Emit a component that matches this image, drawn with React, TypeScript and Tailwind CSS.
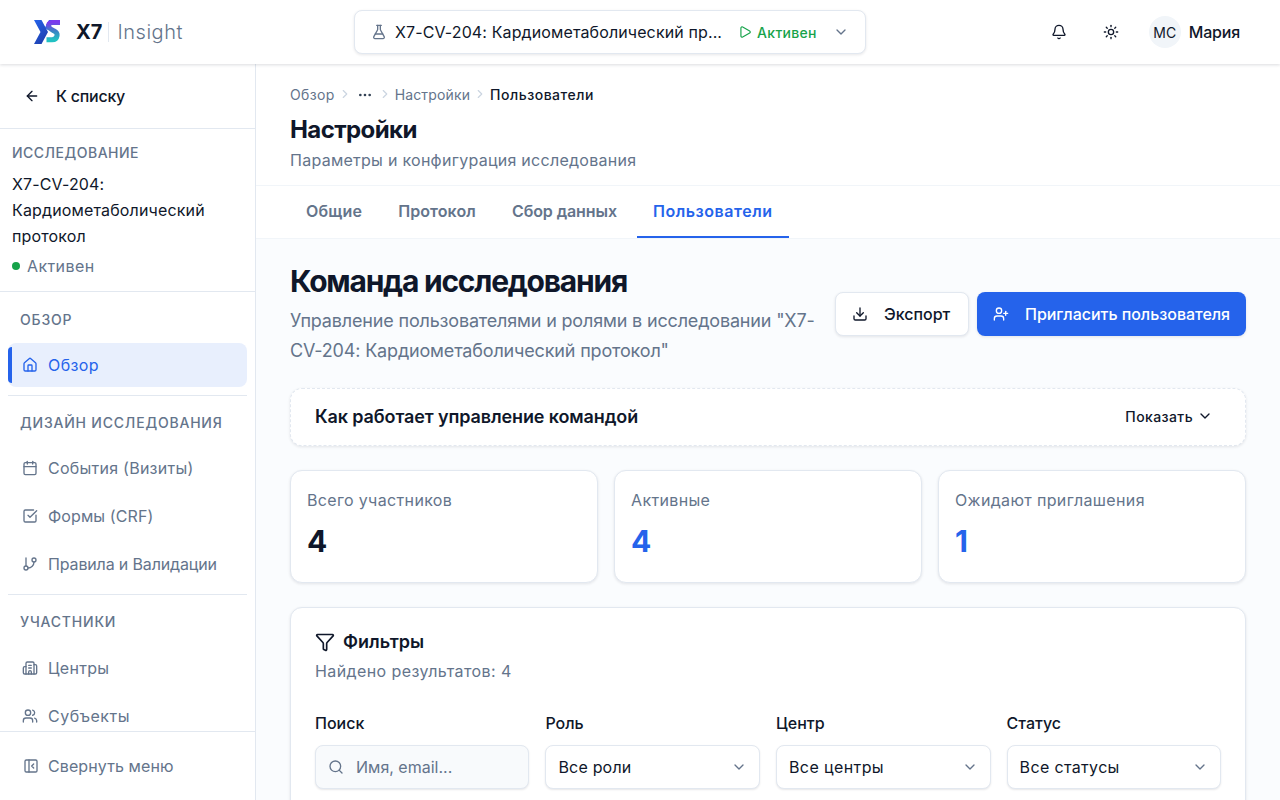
import {
  ArrowLeft,
  Bell,
  Building2,
  Calendar,
  ChevronDown,
  ChevronRight,
  Download,
  Ellipsis,
  FlaskConical,
  Funnel,
  GitBranch,
  House,
  PanelLeftClose,
  Play,
  Search,
  SquareCheckBig,
  Sun,
  UserPlus,
  Users,
} from 'lucide-react';
import type { ReactNode } from 'react';

const Logo = () => (
  <svg className="ml-px" width="28" height="26" viewBox="0 0 28 26" fill="none">
    <defs>
      <linearGradient id="lx" x1="0" y1="0" x2="0.6" y2="1">
        <stop offset="0" stopColor="#2563eb" />
        <stop offset="1" stopColor="#1e40af" />
      </linearGradient>
      <linearGradient id="ls" x1="0" y1="0" x2="0" y2="1">
        <stop offset="0" stopColor="#7c3aed" />
        <stop offset="0.5" stopColor="#3b82c4" />
        <stop offset="1" stopColor="#22c1c3" />
      </linearGradient>
    </defs>
    <path d="M12 8.500 16 1h4.500L14.500 11z" fill="#2563eb" />
    <path d="M1 1h7.500l6.500 12-6.500 12H1l6.500-12z" fill="url(#lx)" />
    <path d="M27 3.500h-7.500c-3.200 0-4.700 2.200-3.700 4.500.8 1.900 3 2.800 5 3.800 2 1 3.700 2.400 3.300 4.700-.4 2.600-2.500 4.200-5 4.200h-5.600" stroke="url(#ls)" strokeWidth="5" fill="none" />
  </svg>
);

const NavItem = ({ icon, label, active, tr = '' }: { icon: ReactNode; label: string; active?: boolean; tr?: string }) => (
  <div className={`relative flex h-11 items-center gap-2.5 rounded-lg px-3.5 text-[16px] ${active ? 'bg-[#e8effd] text-[#2563eb]' : 'text-[#64748b]'}`}>
    {active && <div className="absolute left-0 top-1 h-9 w-1 rounded-l-sm bg-[#2563eb]" />}
    {icon}
    <span className={tr}>{label}</span>
  </div>
);

const SectionLabel = ({ children }: { children: ReactNode }) => (
  <div className="px-3 text-[14px] font-medium uppercase leading-5 tracking-[0.8px] text-[#64748b]">{children}</div>
);

const StatCard = ({ label, value, blue }: { label: string; value: string; blue?: boolean }) => (
  <div className="h-[113px] flex-1 rounded-xl border border-[#e2e8f0] bg-white px-4 pt-[17px] shadow-[0_1px_3px_rgba(15,23,42,0.1)]">
    <div className="text-[16px] leading-6 tracking-[0.35px] text-[#64748b]">{label}</div>
    <div className={`mt-[11px] text-[30px] font-bold leading-9 ${blue ? 'text-[#2563eb]' : 'text-[#0f172a]'}`}>{value}</div>
  </div>
);

const FilterSelect = ({ label, value, tr }: { label: string; value: string; tr: string }) => (
  <div>
    <div className="text-[16px] font-medium leading-6 text-[#0f172a]">{label}</div>
    <div className="mt-2.5 flex h-11 items-center justify-between rounded-lg border border-[#e2e8f0] bg-white pl-3 pr-3 text-[16px] text-[#0f172a] shadow-[0_1px_2px_rgba(15,23,42,0.1)]">
      <span className={tr}>{value}</span>
      <ChevronDown className="h-4 w-4 text-[#64748b]" />
    </div>
  </div>
);

export default function App() {
  return (
    <div className="flex h-screen flex-col overflow-hidden bg-white font-['Inter',sans-serif] text-[#0f172a]">
      <header className="relative z-10 flex h-16 shrink-0 items-center justify-between bg-white pl-8 pr-10 shadow-[0_1px_3px_rgba(15,23,42,0.15)]">
        <div className="flex w-[322px] items-center">
          <Logo />
          <span className="ml-[15px] text-[20px] font-bold leading-7">X7</span>
          <span className="ml-[6px] mr-[8px] h-5 w-px bg-[#e2e8f0]" />
          <span className="text-[20px] font-light leading-7 tracking-[0.55px] text-[#64748b]">Insight</span>
        </div>
        <div className="flex h-11 w-[512px] items-center rounded-lg border border-[#e2e8f0] bg-white pl-4 pr-4 shadow-[0_1px_3px_rgba(15,23,42,0.1)]">
          <FlaskConical className="h-4 w-4 text-[#64748b]" />
          <span className="ml-2 text-[16px] tracking-[0.12px]">X7-CV-204: Кардиометаболический пр...</span>
          <Play className="ml-4 h-3.5 w-3.5 text-[#16a34a]" />
          <span className="ml-[5px] text-[14px] font-medium tracking-[0.3px] text-[#16a34a]">Активен</span>
          <ChevronDown className="ml-auto h-4 w-4 text-[#64748b]" />
        </div>
        <div className="flex flex-1 items-center justify-end">
          <Bell className="h-4 w-4" />
          <Sun className="ml-9 h-4 w-4" />
          <div className="ml-[30px] flex h-8 w-8 items-center justify-center rounded-full bg-[#f1f5f9] text-[14px]">МС</div>
          <span className="ml-2 text-[16px] font-medium tracking-[-0.2px]">Мария</span>
        </div>
      </header>

      <div className="flex min-h-0 flex-1">
        <aside className="flex w-64 shrink-0 flex-col border-r border-[#e2e8f0] bg-white">
          <div className="flex h-[65px] shrink-0 items-center gap-4 border-b border-[#e2e8f0] px-6 text-[16px] font-medium tracking-[-0.25px]">
            <ArrowLeft className="h-4 w-4" />
            <span>К списку</span>
          </div>
          <div className="shrink-0 border-b border-[#e2e8f0] px-3 pb-[13px] pt-3.5">
            <div className="text-[14px] font-medium uppercase leading-5 tracking-[0.5px] text-[#64748b]">Исследование</div>
            <div className="mt-2 text-[16px] leading-[26px] tracking-[0.15px]">X7-CV-204: Кардиометаболический протокол</div>
            <div className="mt-[5px] flex items-center gap-[7px] text-[16px] leading-6 tracking-[0.4px] text-[#64748b]">
              <span className="h-2 w-2 rounded-full bg-[#16a34a]" />
              Активен
            </div>
          </div>
          <nav className="min-h-0 flex-1 overflow-hidden px-2 pt-[18px]">
            <SectionLabel>Обзор</SectionLabel>
            <div className="mt-[13px]">
              <NavItem active icon={<House className="h-4 w-4" />} label="Обзор" tr="tracking-[0.4px]" />
            </div>
            <div className="my-2 h-px bg-[#e2e8f0]" />
            <div className="pt-[9px]">
              <SectionLabel>Дизайн исследования</SectionLabel>
            </div>
            <div className="mt-[13px] flex flex-col gap-1">
              <NavItem icon={<Calendar className="h-4 w-4" />} label="События (Визиты)" tr="tracking-[0.25px]" />
              <NavItem icon={<SquareCheckBig className="h-4 w-4" />} label="Формы (CRF)" tr="tracking-[0.1px]" />
              <NavItem icon={<GitBranch className="h-4 w-4" />} label="Правила и Валидации" tr="tracking-[-0.15px]" />
            </div>
            <div className="my-2 h-px bg-[#e2e8f0]" />
            <div className="pt-[9px]">
              <SectionLabel>Участники</SectionLabel>
            </div>
            <div className="mt-3.5 flex flex-col gap-1">
              <NavItem icon={<Building2 className="h-4 w-4" />} label="Центры" tr="tracking-[0.3px]" />
              <NavItem icon={<Users className="h-4 w-4" />} label="Субъекты" tr="tracking-[0.5px]" />
            </div>
          </nav>
          <div className="flex h-[69px] shrink-0 items-center gap-[9px] border-t border-[#e2e8f0] px-[23px] text-[16px] tracking-[0.1px] text-[#64748b]">
            <PanelLeftClose className="h-4 w-4" />
            <span>Свернуть меню</span>
          </div>
        </aside>

        <main className="min-w-0 flex-1 overflow-hidden bg-[#fafcfe]">
          <div className="bg-white">
            <div className="h-[122px] border-b border-[#f1f5f9] px-[34px] pt-5">
              <div className="flex h-5 items-center text-[14px] text-[#64748b]">
                <span className="tracking-[0.35px]">Обзор</span>
                <ChevronRight className="mx-[3px] h-3.5 w-3.5 text-[#cbd5e1]" />
                <Ellipsis className="mx-[2px] mt-px h-4 w-4 text-[#334155]" />
                <ChevronRight className="mx-[3px] h-3.5 w-3.5 text-[#cbd5e1]" />
                <span className="tracking-[0.15px]">Настройки</span>
                <ChevronRight className="mx-[3px] h-3.5 w-3.5 text-[#cbd5e1]" />
                <span className="font-medium tracking-[0.5px] text-[#0f172a]">Пользователи</span>
              </div>
              <h2 className="mt-2.5 text-[24px] font-bold leading-8 tracking-[-0.6px]">Настройки</h2>
              <p className="mt-0.5 text-[16px] leading-6 tracking-[0.27px] text-[#64748b]">Параметры и конфигурация исследования</p>
            </div>
            <div className="flex h-[53px] border-b border-[#f1f5f9] px-[34px] text-[16px] font-semibold text-[#64748b]">
              <div className="flex items-center border-b-2 border-transparent px-4 tracking-[0.2px]">Общие</div>
              <div className="ml-1 flex items-center border-b-2 border-transparent px-4 tracking-[0.1px]">Протокол</div>
              <div className="ml-1 flex items-center border-b-2 border-transparent px-4 tracking-[-0.1px]">Сбор данных</div>
              <div className="ml-1 flex items-center border-b-2 border-[#2563eb] px-4 tracking-[0.55px] text-[#2563eb]">Пользователи</div>
            </div>
          </div>

          <div className="px-[34px] pt-6">
            <div className="flex items-start justify-between">
              <div className="w-[530px]">
                <h1 className="text-[30px] font-bold leading-9 tracking-[-1.23px]">Команда исследования</h1>
                <p className="mt-[7px] text-[18px] leading-[30px] tracking-[-0.17px] text-[#64748b]">Управление пользователями и ролями в исследовании "X7-CV-204: Кардиометаболический протокол"</p>
              </div>
              <div className="mt-[29px] flex gap-2">
                <button className="flex h-11 w-[134px] items-center gap-4 rounded-lg border border-[#e2e8f0] bg-white pl-4 text-[16px] font-medium shadow-[0_1px_3px_rgba(15,23,42,0.1)]">
                  <Download className="h-4 w-4" />
                  Экспорт
                </button>
                <button className="flex h-11 w-[269px] items-center gap-4 rounded-lg bg-[#2563eb] pl-4 text-[16px] font-medium tracking-[-0.03px] text-white shadow-[0_1px_3px_rgba(15,23,42,0.1)]">
                  <UserPlus className="h-4 w-4" />
                  Пригласить пользователя
                </button>
              </div>
            </div>

            <div className="mt-[22px] flex h-[58px] items-center justify-between rounded-xl border border-dashed border-[#e2e8f0] bg-white pb-0.5 pl-6 pr-8 shadow-[0_1px_3px_rgba(15,23,42,0.1)]">
              <span className="text-[18px] font-semibold tracking-[-0.12px]">Как работает управление командой</span>
              <span className="flex items-center gap-1 text-[14px] font-medium tracking-[0.4px]">
                Показать
                <ChevronDown className="h-4 w-4" />
              </span>
            </div>

            <div className="mt-6 flex gap-4">
              <StatCard label="Всего участников" value="4" />
              <StatCard label="Активные" value="4" blue />
              <StatCard label="Ожидают приглашения" value="1" blue />
            </div>

            <div className="mt-6 rounded-xl border border-[#e2e8f0] bg-white px-6 pb-6 pt-5 shadow-[0_1px_3px_rgba(15,23,42,0.1)]">
              <div className="flex items-center gap-2 text-[18px] font-semibold leading-7">
                <Funnel className="h-5 w-5" />
                Фильтры
              </div>
              <div className="mt-[3px] text-[16px] leading-6 tracking-[0.4px] text-[#64748b]">Найдено результатов: 4</div>
              <div className="mt-7 grid grid-cols-[214.4px_214.6px_214.6px_214.4px] gap-4">
                <div>
                  <div className="text-[16px] font-medium leading-6">Поиск</div>
                  <div className="mt-2.5 flex h-11 items-center gap-3 rounded-lg border border-[#e2e8f0] bg-[#f8fafc] pl-3 text-[16px] text-[#64748b] shadow-[0_1px_2px_rgba(15,23,42,0.1)]">
                    <Search className="h-4 w-4" />
                    Имя, email...
                  </div>
                </div>
                <FilterSelect label="Роль" value="Все роли" tr="tracking-[0.2px]" />
                <FilterSelect label="Центр" value="Все центры" tr="tracking-[0.4px]" />
                <FilterSelect label="Статус" value="Все статусы" tr="tracking-[0.35px]" />
              </div>
            </div>
          </div>
        </main>
      </div>
    </div>
  );
}
